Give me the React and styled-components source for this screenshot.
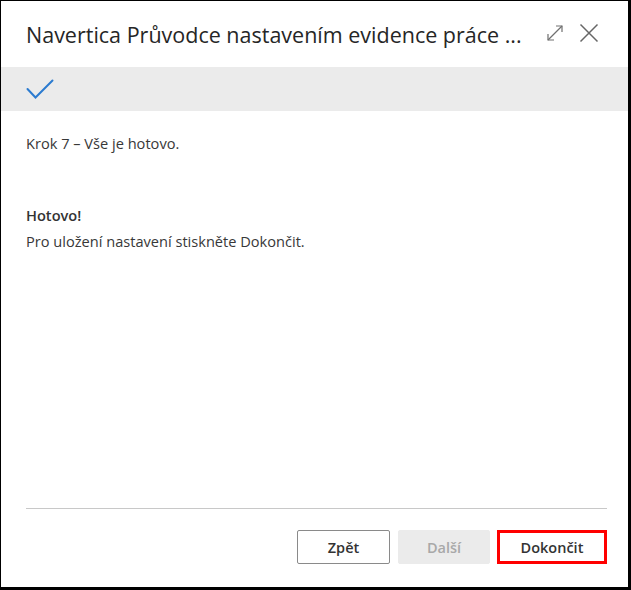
import React from 'react';
import styled, { createGlobalStyle } from 'styled-components';

const GlobalStyle = createGlobalStyle`
  html, body {
    margin: 0;
    padding: 0;
    background: #fff;
  }
  * {
    box-sizing: border-box;
  }
`;

const Dialog = styled.div`
  width: 631px;
  height: 590px;
  display: flex;
  flex-direction: column;
  background: #fff;
  border-style: solid;
  border-color: #000;
  border-width: 1px 3px 3px 1px;
  font-family: "Open Sans", "Noto Sans", sans-serif;
  color: #333;
`;

const Header = styled.div`
  height: 66px;
  display: flex;
  align-items: center;
  padding: 0 27px 0 25px;
  gap: 12px;
`;

const Title = styled.h1`
  flex: 1;
  margin: 0;
  font-size: 21.5px;
  font-weight: 400;
  color: #262626;
  white-space: nowrap;
  overflow: hidden;
  text-overflow: ellipsis;
`;

const IconButton = styled.button`
  width: 24px;
  height: 24px;
  padding: 0;
  border: none;
  background: none;
  display: flex;
  align-items: center;
  justify-content: center;
  cursor: pointer;
`;

const Actions = styled.div`
  display: flex;
  align-items: center;
  gap: 10px;
  margin-top: -2px;
`;

const StepBar = styled.div`
  height: 44px;
  background: #ebebeb;
  display: flex;
  align-items: center;
  padding-left: 25px;
`;

const Content = styled.div`
  flex: 1;
  padding: 22px 21px 0 25px;
  font-size: 14.6px;
  line-height: 20px;
  color: #383838;
`;

const Paragraph = styled.p`
  margin: 0 0 ${(p) => p.$gap || 0}px;
`;

const Heading = styled.div`
  font-weight: 600;
  margin-bottom: 6px;
  color: #333;
`;

const Divider = styled.hr`
  margin: 0 21px 0 25px;
  border: none;
  border-top: 1px solid #c8c8c8;
`;

const Footer = styled.div`
  display: flex;
  justify-content: flex-end;
  align-items: center;
  gap: 8px;
  padding: 21px 21px 23px 25px;
`;

const Button = styled.button`
  width: ${(p) => p.$width || 93}px;
  height: 34px;
  font-family: "Open Sans", "Noto Sans", sans-serif;
  font-size: 14.5px;
  font-weight: 600;
  color: #333;
  background: #fff;
  border: 1px solid #8a8a8a;
  border-radius: 2px;
  cursor: pointer;

  &:disabled {
    background: #ebebeb;
    border-color: #ebebeb;
    color: #a8a8a8;
    cursor: default;
  }
`;

const PrimaryButton = styled(Button)`
  border: 3px solid #f00;
  border-radius: 0;
  margin-left: -1px;
`;

function ExpandIcon() {
  return (
    <svg width="20" height="20" viewBox="0 0 20 20" fill="none" stroke="#707070" strokeWidth="1.2">
      <path d="M3 17 L17 3" />
      <path d="M11 3 H17 V9" />
      <path d="M3 11 V17 H9" />
    </svg>
  );
}

function CloseIcon() {
  return (
    <svg width="20" height="20" viewBox="0 0 20 20" fill="none" stroke="#666" strokeWidth="1.5">
      <path d="M1.5 1.5 L18.5 18.5 M18.5 1.5 L1.5 18.5" />
    </svg>
  );
}

function CheckIcon() {
  return (
    <svg width="28" height="20" viewBox="0 0 28 20" fill="none" stroke="#2b7bd0" strokeWidth="2" strokeLinecap="round">
      <path d="M1.5 10 L9.5 18.5 L26.5 1.5" />
    </svg>
  );
}

export default function App() {
  return (
    <>
      <GlobalStyle />
      <Dialog>
        <Header>
          <Title>Navertica Průvodce nastavením evidence práce ...</Title>
          <Actions>
            <IconButton aria-label="Maximalizovat"><ExpandIcon /></IconButton>
            <IconButton aria-label="Zavřít"><CloseIcon /></IconButton>
          </Actions>
        </Header>
        <StepBar>
          <CheckIcon />
        </StepBar>
        <Content>
          <Paragraph $gap={52}>Krok 7 – Vše je hotovo.</Paragraph>
          <Heading>Hotovo!</Heading>
          <Paragraph>Pro uložení nastavení stiskněte Dokončit.</Paragraph>
        </Content>
        <Divider />
        <Footer>
          <Button>Zpět</Button>
          <Button disabled $width={92}>Další</Button>
          <PrimaryButton $width={110}>Dokončit</PrimaryButton>
        </Footer>
      </Dialog>
    </>
  );
}
